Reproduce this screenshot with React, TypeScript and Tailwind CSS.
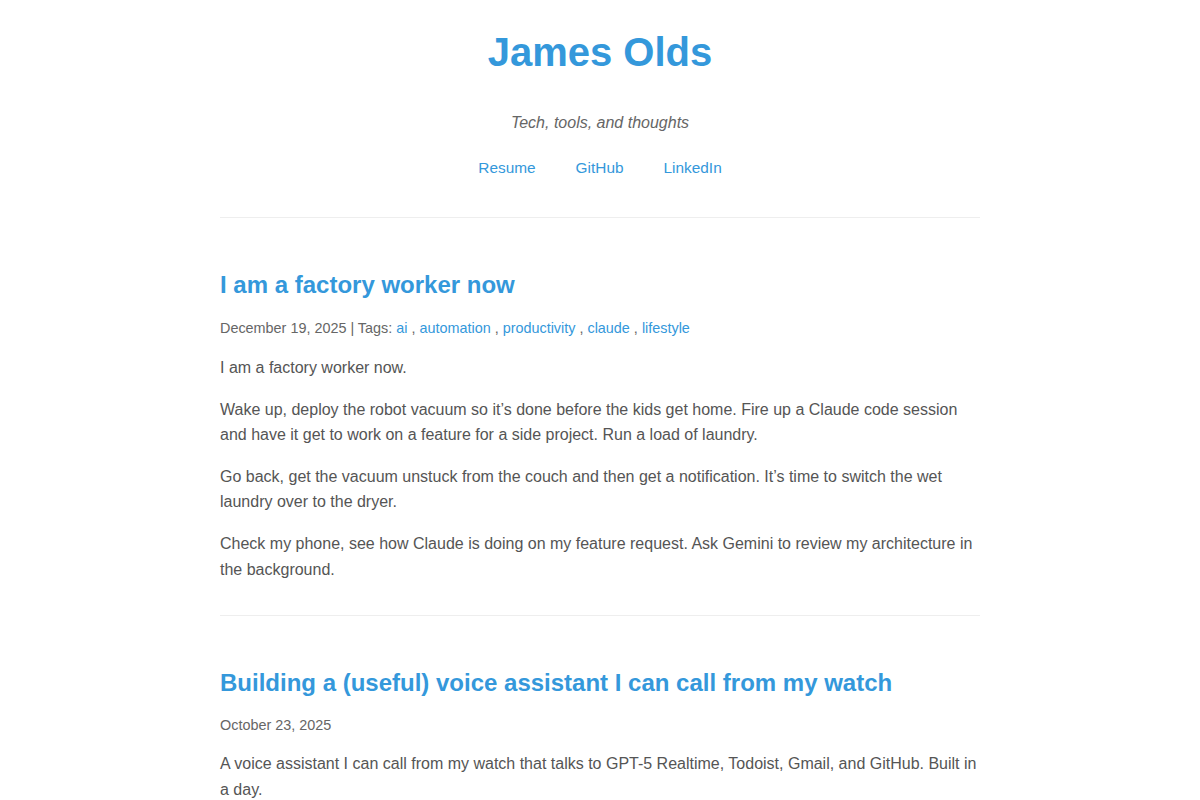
import React from "react";

const font = { fontFamily: '"Liberation Sans", Arial, Helvetica, sans-serif' };

export default function App() {
  return (
    <div className="min-h-[800px] bg-white text-[#555]" style={font}>
      <div className="mx-auto w-[760px]">
        <header className="border-b border-[#eee] pb-[37px] pt-[28px] text-center">
          <h1 className="text-[40px] font-bold leading-[48px] text-[#3498db]">James Olds</h1>
          <p className="mt-[35px] text-[16px] italic leading-[24px] text-[#666]">Tech, tools, and thoughts</p>
          <nav className="mt-[21px] flex justify-center gap-[40px] text-[15.4px] leading-[24px]">
            <a className="text-[#3498db]" href="#">Resume</a>
            <a className="text-[#3498db]" href="#">GitHub</a>
            <a className="text-[#3498db]" href="#">LinkedIn</a>
          </nav>
        </header>

        <article className="border-b border-[#eee] pb-[17px] pt-[52px]">
          <h2 className="text-[24px] font-bold leading-[30px] text-[#3498db]">I am a factory worker now</h2>
          <div className="mt-[17px] text-[14.4px] leading-[23px] text-[#666]">
            December 19, 2025 | Tags: <a className="text-[#3498db]" href="#">ai</a> , <a className="text-[#3498db]" href="#">automation</a> , <a className="text-[#3498db]" href="#">productivity</a> , <a className="text-[#3498db]" href="#">claude</a> , <a className="text-[#3498db]" href="#">lifestyle</a>
          </div>
          <div className="mt-[15px] text-[16px] leading-[1.6]">
            <p className="mb-4">I am a factory worker now.</p>
            <p className="mb-4">Wake up, deploy the robot vacuum so it’s done before the kids get home. Fire up a Claude code session and have it get to work on a feature for a side project. Run a load of laundry.</p>
            <p className="mb-4">Go back, get the vacuum unstuck from the couch and then get a notification. It’s time to switch the wet laundry over to the dryer.</p>
            <p className="mb-4">Check my phone, see how Claude is doing on my feature request. Ask Gemini to review my architecture in the background.</p>
          </div>
        </article>

        <article className="pb-4 pt-[52px]">
          <h2 className="text-[24px] font-bold leading-[30px] text-[#3498db]">Building a (useful) voice assistant I can call from my watch</h2>
          <div className="mt-[16px] text-[14.4px] leading-[23px] text-[#666]">October 23, 2025</div>
          <div className="mt-[14px] text-[16px] leading-[1.6]">
            <p className="mb-4">A voice assistant I can call from my watch that talks to GPT-5 Realtime, Todoist, Gmail, and GitHub. Built in a day.</p>
          </div>
        </article>
      </div>
    </div>
  );
}
